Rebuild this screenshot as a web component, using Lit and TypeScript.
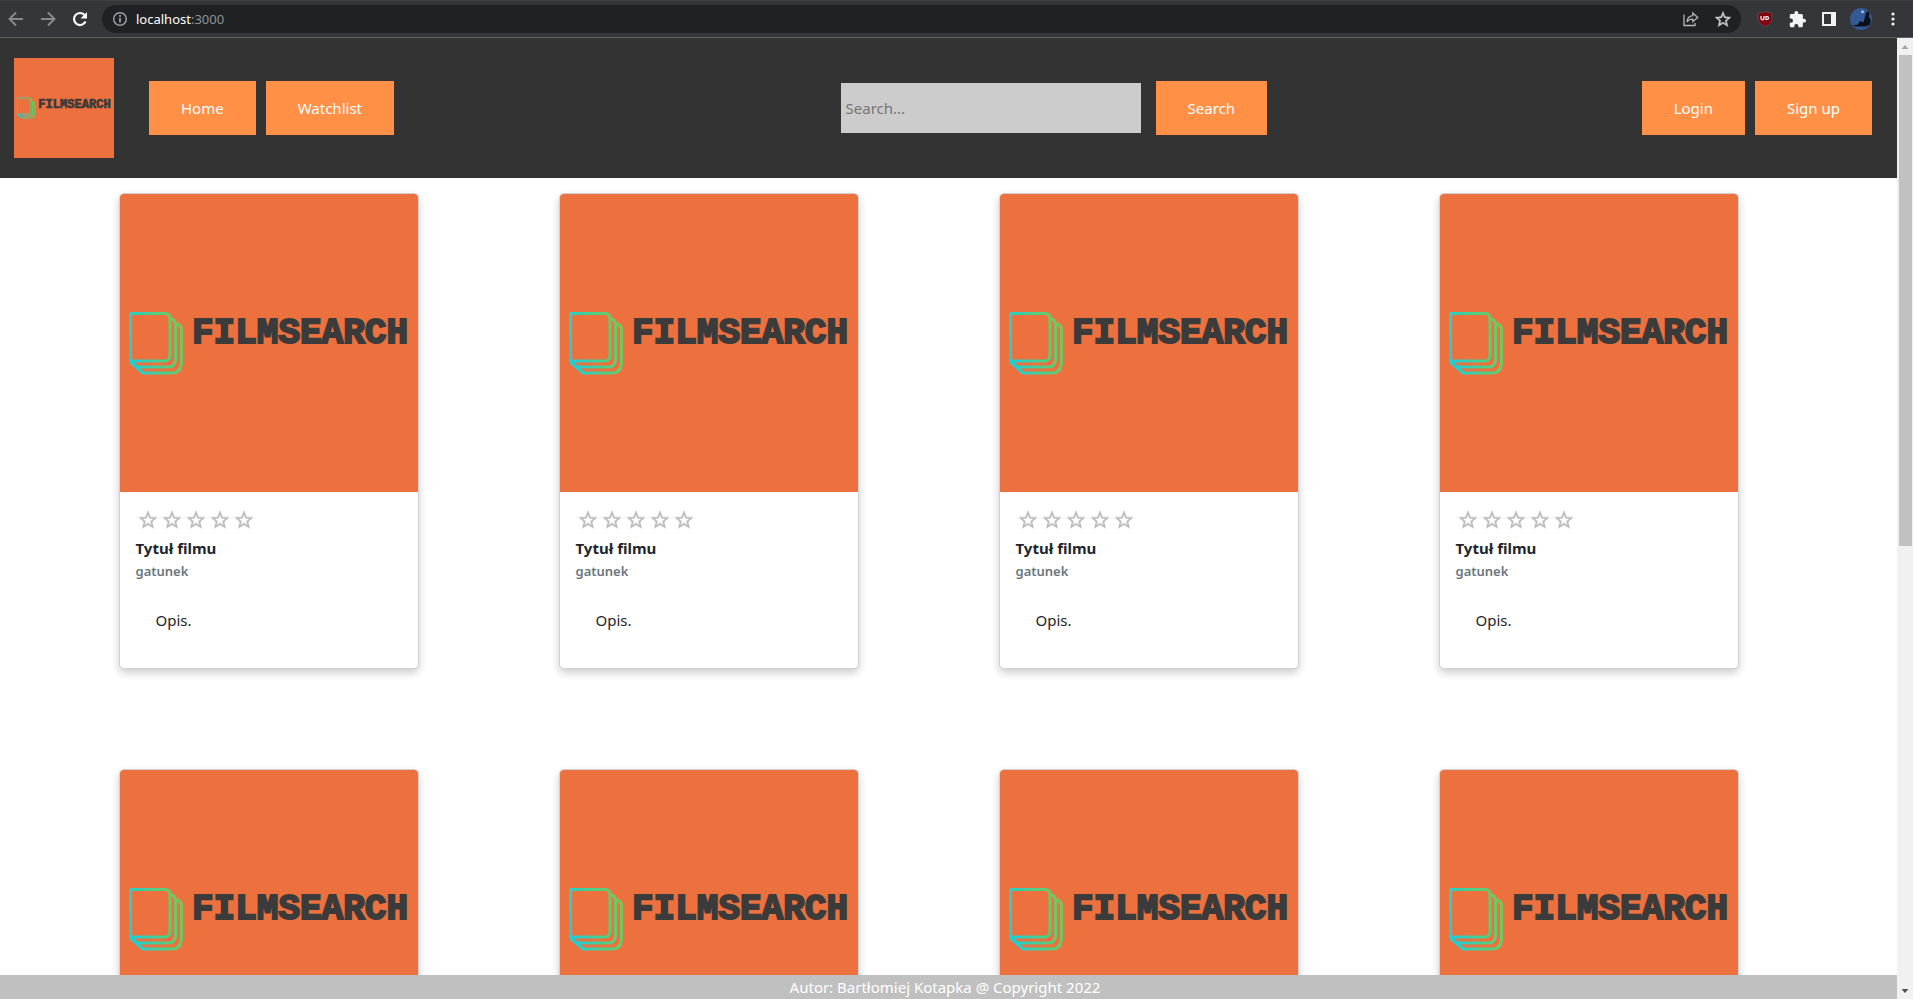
import { LitElement, html, svg, css } from "lit";
import { customElement } from "lit/decorators.js";

const STAR_OUTLINE =
  "M22 9.24l-7.19-.62L12 2 9.19 8.63 2 9.24l5.46 4.73L5.82 21 12 17.27 18.18 21l-1.63-7.03L22 9.24zM12 15.4l-3.76 2.27 1-4.28-3.32-2.88 4.38-.38L12 6.1l1.71 4.04 4.38.38-3.32 2.88 1 4.28L12 15.4z";

@customElement("film-logo")
export class FilmLogo extends LitElement {
  static styles = css`
    :host { display: block; background: #ec713e; aspect-ratio: 1; }
    svg { display: block; width: 100%; height: 100%; }
    .sheet { fill: none; stroke: url(#tint); stroke-width: 3; stroke-linejoin: round; }
    .name { font: 700 36px "Liberation Mono", monospace; fill: #3b3b3b; stroke: #3b3b3b; stroke-width: 2; }
  `;
  render() {
    return html`<svg viewBox="0 0 298 298" role="img" aria-label="Filmsearch">
      <defs>
        <linearGradient id="tint" gradientUnits="userSpaceOnUse" x1="10" y1="150" x2="62" y2="138">
          <stop offset="0" stop-color="#1fcfd6" />
          <stop offset=".55" stop-color="#4fcf83" />
          <stop offset="1" stop-color="#7cc558" />
        </linearGradient>
      </defs>
      ${svg`
        <path class="sheet" d="M10.500 119.500H45Q50 119.500 50 124.500V161Q50 167 44 167H10.500Z" />
        <path class="sheet" d="M50 125Q55.500 125 55.500 131V165Q55.500 173 48 173H17L10.500 167" />
        <path class="sheet" d="M55.500 130Q61.500 130 61.500 136V168Q61.500 179 51 179H23L10.500 168" />
        <text class="name" x="72" y="149">FILMSEARCH</text>`}
    </svg>`;
  }
}

@customElement("film-card")
export class FilmCard extends LitElement {
  static styles = css`
    :host {
      display: block; box-sizing: border-box; width: 300px; height: 476px;
      border: 1px solid #d0d0d0; border-radius: 5px; overflow: hidden;
      background: #fff; box-shadow: 0 4px 8px rgba(0, 0, 0, .2);
    }
    .body { padding: 16px; }
    .stars { display: flex; height: 24px; }
    .star { padding: 0; border: 0; background: none; width: 24px; height: 24px; }
    .star svg { display: block; width: 22px; height: 22px; margin: 1px; fill: #bdbdbd; stroke: #bdbdbd; stroke-width: .5; }
    .title { margin: 4px 0 0; font-size: 15px; line-height: 24px; font-weight: 700; }
    .genre { margin: 0; font-size: 13px; line-height: 22px; font-weight: 600; color: #6c757d; }
    .text { margin: 22px 20px; font-size: 15px; line-height: 32px; }
  `;
  render() {
    return html`
      <film-logo></film-logo>
      <div class="body">
        <div class="stars">
          ${[1, 2, 3, 4, 5].map(
            (n) => html`<button class="star" aria-label="${n}"><svg viewBox="0 0 24 24"><path d=${STAR_OUTLINE} /></svg></button>`
          )}
        </div>
        <h2 class="title">Tytuł filmu</h2>
        <h3 class="genre">gatunek</h3>
        <p class="text">Opis.</p>
      </div>`;
  }
}

@customElement("browser-bar")
export class BrowserBar extends LitElement {
  static styles = css`
    :host {
      display: flex; align-items: center; box-sizing: border-box; height: 38px; padding: 0 8px 0 4px;
      background: #35363a; border-top: 1px solid #3f4043; border-bottom: 1px solid #5f6063;
    }
    button { display: grid; place-items: center; padding: 0; border: 0; background: none; width: 24px; height: 24px; }
    svg { display: block; fill: none; }
    .nav { display: flex; gap: 8px; }
    .address {
      flex: 1; display: flex; align-items: center; box-sizing: border-box; height: 28px;
      margin: 0 12px 0 10px; padding: 0 6px 0 10px; border-radius: 14px; background: #202124;
    }
    .url { flex: 1; margin-left: 8px; color: #fff; font: 13px/20px "Noto Sans", sans-serif; }
    .port { color: #8f9296; }
    .marks, .tools { display: flex; align-items: center; gap: 8px; }
  `;
  render() {
    return html`
      <div class="nav">
        <button aria-label="Back"><svg width="16" height="16" viewBox="0 0 16 16" stroke="#87898c" stroke-width="2"><path d="M15 8H2.500M8 1.500L1.500 8 8 14.500" /></svg></button>
        <button aria-label="Forward"><svg width="16" height="16" viewBox="0 0 16 16" stroke="#87898c" stroke-width="2"><path d="M1 8h12.500M8 1.500L14.500 8 8 14.500" /></svg></button>
        <button aria-label="Reload"><svg width="16" height="16" viewBox="0 0 16 16"><path d="M13.500 10.500A6 6 0 1 1 12.500 4" stroke="#fff" stroke-width="2.200" /><path d="M15 1v6.500H8.500z" fill="#fff" /></svg></button>
      </div>
      <div class="address">
        <svg width="16" height="16" viewBox="0 0 16 16" stroke="#9aa0a6"><circle cx="8" cy="8" r="6.300" stroke-width="1.500" /><path d="M8 7v4.500M8 4v2" stroke-width="1.800" /></svg>
        <span class="url">localhost<span class="port">:3000</span></span>
        <div class="marks">
          <button aria-label="Share"><svg width="16" height="16" viewBox="0 0 16 16" stroke="#b4b6b9" stroke-width="1.300"><path d="M1 3.500V14.500H12V12M9.800 2l5 4.500-5 4.200V8.200C7 8.200 5.200 9 4 11c.2-3.500 2.500-6 5.800-6.300z" /></svg></button>
          <button aria-label="Bookmark"><svg width="16" height="16" viewBox="2 1.500 20 20"><path fill="#c6c8ca" stroke="#c6c8ca" stroke-width=".6" d=${STAR_OUTLINE} /></svg></button>
        </div>
      </div>
      <div class="tools">
        <button aria-label="uBlock"><svg width="16" height="16" viewBox="0 0 16 16"><path d="M8 .3C6 1.500 3.500 2 1 2v5c0 4.500 2.500 6.500 7 8.700C12.500 13.500 15 11.500 15 7V2C12.500 2 10 1.500 8 .3z" fill="#800610" stroke="#5f6063" stroke-width=".6" /><path d="M4 5v2.300a1.500 1.500 0 0 0 3 0V5M9 5.500v3h1a1.500 1.500 0 0 0 0-3z" stroke="#fff" stroke-width="1.200" /></svg></button>
        <button aria-label="Extensions"><svg width="17" height="17" viewBox="1 1 22 22"><path fill="#f1f3f4" d="M20.500 11H19V7c0-1.100-.9-2-2-2h-4V3.500a2.500 2.500 0 0 0-5 0V5H4c-1.100 0-2 .9-2 2v3.800h1.500a2.700 2.700 0 0 1 0 5.400H2V20c0 1.100.9 2 2 2h3.800v-1.500a2.700 2.700 0 0 1 5.400 0V22H17c1.100 0 2-.9 2-2v-4h1.500a2.500 2.500 0 0 0 0-5z" /></svg></button>
        <button aria-label="Side panel"><svg width="14" height="14" viewBox="0 0 14 14"><path fill="#f1f3f4" fill-rule="evenodd" d="M0 0h14v14H0zM2 2v10h7V2z" /></svg></button>
        <button aria-label="Profile"><svg width="22" height="22" viewBox="0 0 22 22"><circle cx="11" cy="11" r="11" fill="#335a94" /><circle cx="12.500" cy="3.800" r="1.500" fill="#9ac4d4" /><path fill="#0b1018" d="M3 17.500l5-1 2-3.500 3.500 1.500 1.200-5L16 5l1.500-2 2 1.500-.5 4 2 4.500-1.500 4-4 1.500H6z" /></svg></button>
        <button aria-label="Menu"><svg width="4" height="14" viewBox="0 0 4 14"><circle cx="2" cy="2" r="1.600" fill="#f1f3f4" /><circle cx="2" cy="7" r="1.600" fill="#f1f3f4" /><circle cx="2" cy="12" r="1.600" fill="#f1f3f4" /></svg></button>
      </div>`;
  }
}

@customElement("app-root")
export class AppRoot extends LitElement {
  static styles = css`
    :host {
      display: flex; flex-direction: column; height: 100vh; overflow: hidden;
      font: 15px/24px "Noto Sans", "Open Sans", sans-serif; color: #212529; background: #fff;
    }
    .window { flex: 1; min-height: 0; display: flex; }
    .page { flex: 1; min-width: 0; display: flex; flex-direction: column; }
    .header {
      display: flex; align-items: center; justify-content: space-between; flex: none;
      box-sizing: border-box; height: 140px; padding: 0 25px 0 14px; background: #333;
    }
    .group { display: flex; align-items: center; gap: 10px; }
    .brand { display: block; width: 100px; margin-right: 25px; }
    .search { display: flex; align-items: center; gap: 15px; padding-left: 72px; }
    .button {
      box-sizing: border-box; height: 54px; padding: 15px 32px; border: 0; background: #ff9045;
      color: #fff; font: inherit; text-decoration: none;
    }
    .field {
      box-sizing: border-box; width: 300px; height: 50px; padding: 2px 5px; border: 0;
      border-radius: 0; background: #ccc; font: inherit;
    }
    .field::placeholder { color: #757575; opacity: 1; }
    .films {
      flex: 1; min-height: 0; overflow: hidden; display: flex; flex-wrap: wrap;
      justify-content: center; align-content: flex-start;
    }
    .film { margin: 15px 90px 85px 50px; }
    .footer { flex: none; padding-right: 7px; background: #c0c0c0; color: #fff; text-align: center; }
    .scrollbar {
      flex: none; width: 16px; display: grid; grid-template-rows: 17px 1fr 17px;
      background: #f1f1f1; justify-items: center;
    }
    .arrow { width: 16px; height: 17px; }
    .thumb { width: 13px; height: 53%; background: #c1c1c1; }
  `;
  render() {
    return html`
      <browser-bar></browser-bar>
      <div class="window">
        <div class="page">
          <header class="header">
            <nav class="group">
              <a class="brand" href="#"><film-logo></film-logo></a>
              <a class="button" href="#">Home</a>
              <a class="button" href="#">Watchlist</a>
            </nav>
            <form class="search" @submit=${(e: Event) => e.preventDefault()}>
              <input class="field" type="text" placeholder="Search..." aria-label="Search" />
              <button class="button">Search</button>
            </form>
            <div class="group">
              <a class="button" href="#">Login</a>
              <a class="button" href="#">Sign up</a>
            </div>
          </header>
          <main class="films">
            ${Array.from({ length: 8 }, () => html`<film-card class="film"></film-card>`)}
          </main>
          <footer class="footer">Autor: Bartłomiej Kotapka @ Copyright 2022</footer>
        </div>
        <div class="scrollbar">
          <svg class="arrow" viewBox="0 0 16 17"><path d="M4.500 11L8 7l3.500 4z" fill="#a3a3a3" /></svg>
          <div class="thumb"></div>
          <svg class="arrow" viewBox="0 0 16 17"><path d="M4.500 7L8 11l3.500-4z" fill="#505050" /></svg>
        </div>
      </div>`;
  }
}
